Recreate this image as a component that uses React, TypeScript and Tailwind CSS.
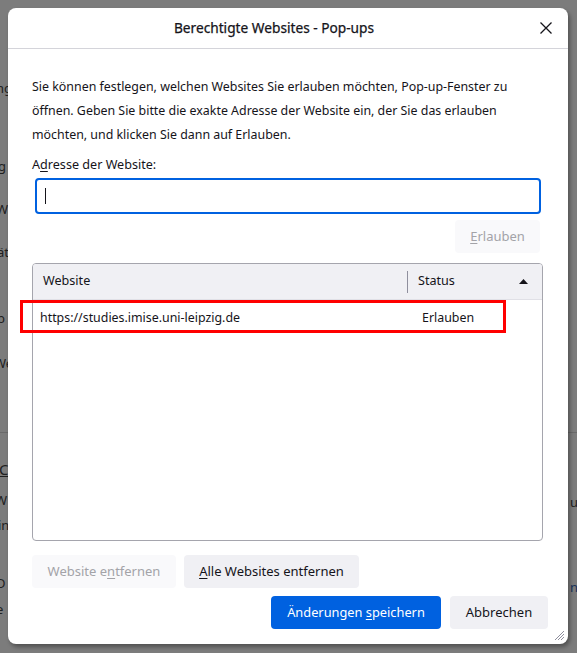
import React from "react";

const F = { fontFamily: '"Noto Sans", "Open Sans", sans-serif' };

function U({ children }: { children: React.ReactNode }) {
  return <span className="underline underline-offset-[2px] decoration-[1px]">{children}</span>;
}

export default function App() {
  return (
    <div className="relative w-[577px] h-[653px] overflow-hidden bg-[#7c7c7c] text-[#1c1b22]" style={F}>
      {/* background page fragments */}
      <div className="absolute left-0 top-0 w-[577px] h-[653px] text-[13px] text-[#202020]">
        <span className="absolute left-[-4px] top-[79px]">ng</span>
        <span className="absolute left-[-2px] top-[157px]">g</span>
        <span className="absolute left-[-4px] top-[200px]">W</span>
        <span className="absolute left-[-3px] top-[243px]">ät</span>
        <span className="absolute left-[-3px] top-[309px]">b</span>
        <span className="absolute left-[-6px] top-[354px]">We</span>
        <div className="absolute left-0 top-[432px] w-[577px] h-px bg-[#6a6a6a]" />
        <span className="absolute left-[-1px] top-[458px] text-[15px] underline">C</span>
        <span className="absolute left-[-5px] top-[491px]">W</span>
        <span className="absolute left-[-2px] top-[516px]">in</span>
        <span className="absolute left-[-4px] top-[574px]">D</span>
        <span className="absolute left-[-4px] top-[600px]">e</span>
        <span className="absolute left-[570px] top-[493px]">u</span>
        <span className="absolute left-[570px] top-[578px] text-[#17325a]">na</span>
      </div>

      {/* dialog */}
      <div className="absolute left-[8px] top-[8px] w-[560px] h-[636px] bg-white rounded-[8px] shadow-[2px_3px_4px_rgba(0,0,0,0.35)] flex flex-col">
        <div className="relative h-[41px] shrink-0 border-b border-[#d4d4da] flex items-center justify-center pr-[28px]">
          <span className="text-[13.7px] text-[#15141a] [-webkit-text-stroke:0.25px_#15141a]">Berechtigte Websites - Pop-ups</span>
          <svg className="absolute right-[16px] top-[14px]" width="12" height="12" viewBox="0 0 12 12">
            <path d="M0.5 0.5 L11.5 11.5 M11.5 0.5 L0.5 11.5" stroke="#15141a" strokeWidth="1.3" />
          </svg>
        </div>

        <div className="flex flex-col pl-[24px] pr-[25px] pt-[26px]">
          <p className="text-[12.4px] leading-[24px] text-[#15141a] whitespace-nowrap">
            Sie können festlegen, welchen Websites Sie erlauben möchten, Pop-up-Fenster zu
            <br />
            öffnen. Geben Sie bitte die exakte Adresse der Website ein, der Sie das erlauben
            <br />
            möchten, und klicken Sie dann auf Erlauben.
          </p>
          <div className="mt-[9px] text-[12.6px] leading-[18px] text-[#15141a]">
            A<U>d</U>resse der Website:
          </div>
          <div className="mt-[4px] ml-[3px] w-[506px] h-[36px] rounded-[4px] border-2 border-[#0061e0] flex items-center pl-[8px]">
            <div className="w-px h-[16px] bg-[#15141a]" />
          </div>
          <div className="mt-[6px] self-end mr-[3px] w-[85px] h-[33px] rounded-[4px] bg-[#f9f9fb] flex items-center justify-center text-[13px] text-[#a3a3a8]">
            <span>
              <U>E</U>rlauben
            </span>
          </div>

          <div className="mt-[10px] h-[278px] rounded-[4px] border border-[#a5a5ad] overflow-hidden flex flex-col">
            <div className="h-[36px] shrink-0 bg-[#f0f0f4] border-b border-[#e0e0e6] flex items-center text-[12.6px] text-[#15141a]">
              <div className="w-[374px] pl-[10px]">Website</div>
              <div className="w-px h-[22px] bg-[#8f8f9d]" />
              <div className="flex-1 flex items-center justify-between pl-[10px] pr-[14px]">
                <span>Status</span>
                <svg width="9" height="5" viewBox="0 0 9 5">
                  <path d="M0 5 L4.5 0 L9 5 Z" fill="#15141a" />
                </svg>
              </div>
            </div>
            <div className="h-[37px] flex items-center text-[12.4px] text-[#15141a]">
              <span className="w-[389px] pl-[7px]">https://studies.imise.uni-leipzig.de</span>
              <span>Erlauben</span>
            </div>
          </div>

          <div className="mt-[14px] flex gap-[8px]">
            <div className="w-[144px] h-[33px] rounded-[4px] bg-[#f9f9fb] flex items-center justify-center text-[13px] text-[#a3a3a8]">
              <span>
                Website e<U>n</U>tfernen
              </span>
            </div>
            <div className="w-[175px] h-[33px] rounded-[4px] bg-[#f0f0f4] flex items-center justify-center text-[13px] text-[#15141a]">
              <span>
                <U>A</U>lle Websites entfernen
              </span>
            </div>
          </div>
        </div>

        <div className="mt-[8px] flex justify-end gap-[9px] pr-[20px]">
          <div className="w-[170px] h-[33px] rounded-[4px] bg-[#0061e0] flex items-center justify-center text-[12.8px] text-white">
            <span>
              Änderungen <U>s</U>peichern
            </span>
          </div>
          <div className="w-[98px] h-[33px] rounded-[4px] bg-[#f0f0f4] flex items-center justify-center text-[13px] text-[#15141a]">
            <span>Abbrechen</span>
          </div>
        </div>

        <svg className="absolute right-[3px] bottom-[3px]" width="12" height="12" viewBox="0 0 12 12">
          <path d="M11 2 L2 11 M11 5 L5 11 M11 8 L8 11" stroke="#8f8f9d" strokeWidth="1" />
        </svg>
      </div>

      {/* red highlight */}
      <div className="absolute left-[20px] top-[300px] w-[486px] h-[33px] border-[3px] border-[#ff0000]" />
    </div>
  );
}
